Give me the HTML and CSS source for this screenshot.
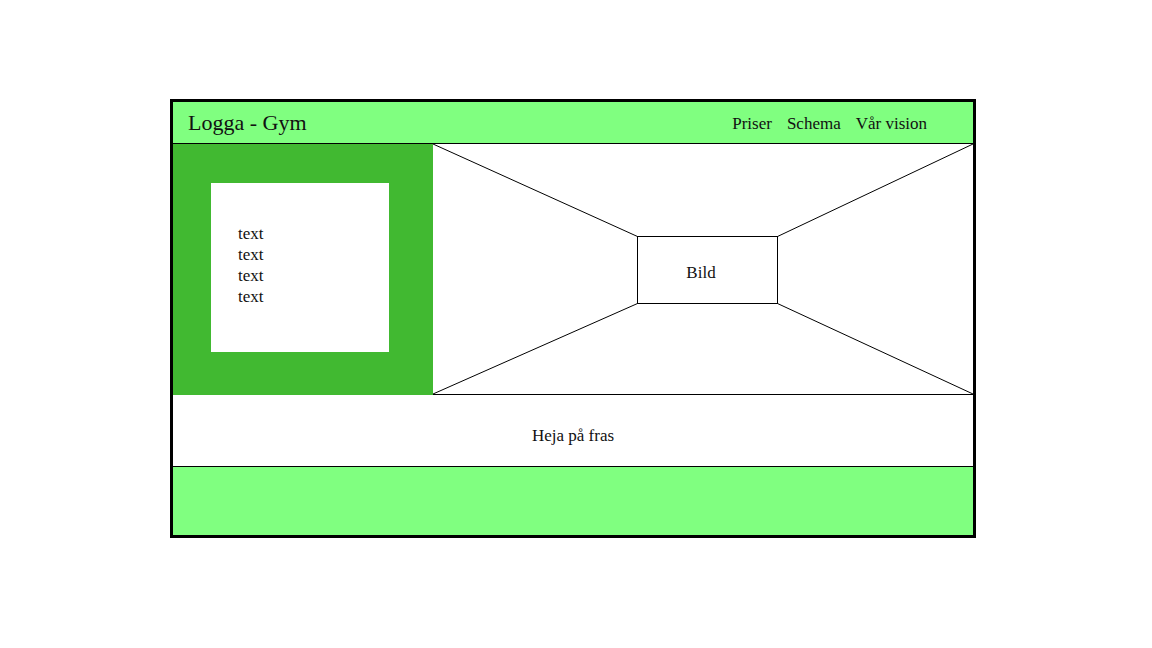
FILE: index.html
```html
<!DOCTYPE html>
<html lang="sv">
<head>
<meta charset="UTF-8" />
<title>Gym</title>
<link rel="stylesheet" href="styles.css">
</head>
<body>
  <div class="site">
    <!-- Header with logo and menu -->
    <header class="header">
      <div class="logo">Logga - Gym</div>
      <nav class="nav">
        <a href="#">Priser</a>
        <a href="#">Schema</a>
        <a href="#">Vår vision</a>
      </nav>
    </header>

    <!-- Main row: info box + picture placeholder -->
    <main class="main">
      <div class="info">
        <div class="info-box">
          <p>text</p>
          <p>text</p>
          <p>text</p>
          <p>text</p>
        </div>
      </div>
      <div class="picture">
        <svg width="540" height="250" viewBox="0 0 540 250">
          <line x1="0" y1="0" x2="204.5" y2="92.5" />
          <line x1="540" y1="0" x2="344.5" y2="92.5" />
          <line x1="0" y1="250" x2="204.5" y2="159.5" />
          <line x1="540" y1="250" x2="344.5" y2="159.5" />
          <rect x="204.5" y="92.5" width="140" height="67" />
          <text x="268" y="134">Bild</text>
        </svg>
      </div>
    </main>

    <div class="slogan">Heja på fras</div>

    <footer class="footer"></footer>
  </div>
</body>
</html>
```

FILE: styles.css
```css
/* Wireframe for gym start page */

body {
  margin: 0;
  background-color: #fff;
  font-family: "Liberation Serif", serif;
  color: #111;
}

.site {
  width: 800px;
  margin: 99px 0 0 170px;
  border: 3px solid #000;
}

/* Header */
.header {
  height: 41px;
  background-color: #80ff80;
  border-bottom: 1px solid #000;
  display: flex;
  align-items: center;
  justify-content: space-between;
  padding: 0 46px 0 15px;
}

.logo {
  font-size: 22px;
  padding-top: 1px;
}

.nav {
  display: flex;
  gap: 15px;
  font-size: 17px;
  padding-top: 3px;
}

.nav a {
  color: #111;
  text-decoration: none;
}

/* Main row */
.main {
  display: grid;
  grid-template-columns: 260px 540px;
  height: 251px;
}

.info {
  background-color: #41b931;
  padding: 39px 44px 43px 38px;
}

.info-box {
  background-color: #fff;
  height: 169px;
  padding: 40px 0 0 27px;
  box-sizing: border-box;
  font-size: 17px;
  line-height: 21px;
}

.info-box p {
  margin: 0;
}

.picture {
  border-bottom: 1px solid #000;
}

.picture svg {
  display: block;
}

.picture line,
.picture rect {
  stroke: #000;
  stroke-width: 1;
  fill: none;
}

.picture text {
  font-family: "Liberation Serif", serif;
  font-size: 17px;
  fill: #111;
  text-anchor: middle;
}

/* Slogan band */
.slogan {
  height: 72px;
  box-sizing: border-box;
  border-bottom: 1px solid #000;
  text-align: center;
  font-family: "Liberation Serif", serif;
  font-size: 17px;
  padding-top: 31px;
}

/* Footer */
.footer {
  height: 68px;
  background-color: #80ff80;
}
```
